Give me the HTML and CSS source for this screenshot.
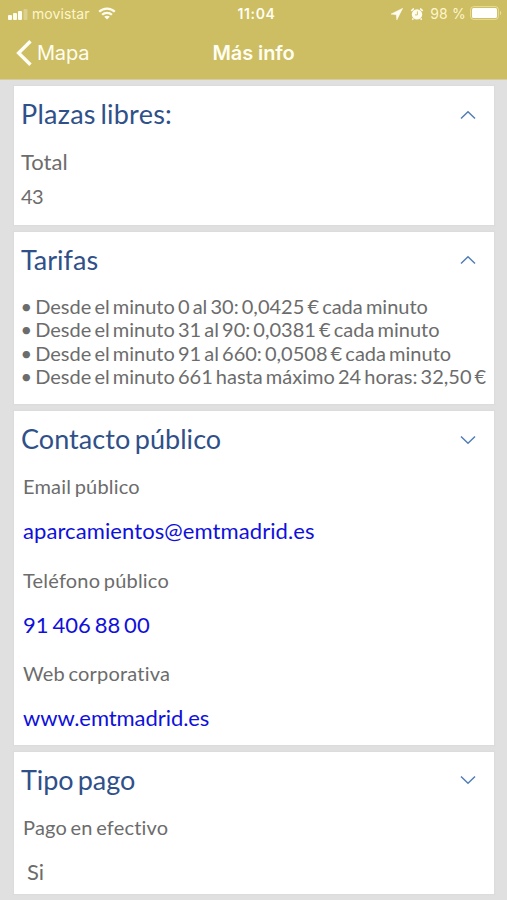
FILE: index.html
```html
<!DOCTYPE html>
<html lang="es">
<head>
<meta charset="utf-8">
<title>Más info</title>
<link rel="stylesheet" href="styles.css">
</head>
<body>
<header class="header">
  <div class="status">
    <div class="status-left">
      <svg class="signal" width="20" height="12" viewBox="0 0 20 12" fill="#fffdf0"><rect x="0" y="7" width="4" height="5" rx="1"/><rect x="5" y="5" width="4" height="7" rx="1"/><rect x="10" y="3" width="4" height="9" rx="1"/><rect x="15.5" y="1" width="4" height="11" rx="1" opacity=".3"/></svg>
      <span class="carrier">movistar</span>
      <svg width="18" height="13" viewBox="0 0 18 13" fill="none" stroke="#fffdf0" stroke-width="2.3"><path d="M1.2 4.8C5.5.5 12.5.5 16.8 4.8M4.1 7.8c2.7-2.7 7.1-2.7 9.8 0"/><path d="M9 12.6 6.2 9.8c1.6-1.5 4-1.5 5.6 0z" fill="#fffdf0" stroke="none"/></svg>
    </div>
    <span class="clock">11:04</span>
    <div class="status-right">
      <svg width="12" height="12" viewBox="0 0 12 12" fill="#fffdf0"><path d="M11.7.3 0 6.1l5.3.6.5 5.2z" stroke="#fffdf0" stroke-width=".5"/></svg>
      <svg class="alarm" width="14" height="14" viewBox="0 0 14 14" fill="none"><circle cx="7" cy="7.4" r="5.2" fill="#fffdf0"/><path d="M1.3 3.8 3.8 1.5M12.7 3.8l-2.5-2.3M3.4 11.5l-1.1 1.1M10.6 11.5l1.1 1.1" stroke="#fffdf0" stroke-width="1.6"/><path d="M7.4 4.4v3.5H5" stroke="#cdbd63" stroke-width=".9"/></svg>
      <span class="percent">98 %</span>
      <svg class="battery" width="32" height="15" viewBox="0 0 32 15"><rect x=".6" y=".6" width="27.8" height="12.8" rx="3" fill="none" stroke="#fff7bd" stroke-opacity=".55"/><rect x="2" y="2" width="25" height="10" rx="1.5" fill="#fffffc"/><path d="M30 4.8c1.7.7 1.7 3.7 0 4.4z" fill="#fff7bd" opacity=".6"/></svg>
    </div>
  </div>
  <nav class="nav">
    <a class="back"><svg width="16" height="26" viewBox="0 0 16 26" fill="none" stroke="#fffef4" stroke-width="3.4"><path d="M14.5 1.2 2.6 13l11.9 11.8"/></svg><span>Mapa</span></a>
    <h1 class="page-title">Más info</h1>
  </nav>
</header>
<main class="cards">
  <section class="card spaces">
    <div class="card-head"><h2 class="t-plazas">Plazas libres:</h2><svg class="chevron" viewBox="0 0 16 10"><path d="M1 8.5 8 1.7l7 6.8"/></svg></div>
    <p class="total">Total</p>
    <p class="count">43</p>
  </section>
  <section class="card rates">
    <div class="card-head"><h2 class="t-tarifas">Tarifas</h2><svg class="chevron" viewBox="0 0 16 10"><path d="M1 8.5 8 1.7l7 6.8"/></svg></div>
    <div class="rate-list">
      <p>• Desde el minuto 0 al 30: 0,0425 € cada minuto</p>
      <p>• Desde el minuto 31 al 90: 0,0381 € cada minuto</p>
      <p>• Desde el minuto 91 al 660: 0,0508 € cada minuto</p>
      <p>• Desde el minuto 661 hasta máximo 24 horas: 32,50 €</p>
    </div>
  </section>
  <section class="card contact">
    <div class="card-head"><h2 class="t-contacto">Contacto público</h2><svg class="chevron" viewBox="0 0 16 10"><path d="M1 1.5 8 8.3l7-6.8"/></svg></div>
    <dl class="fields">
      <dt>Email público</dt><dd><a class="link email">aparcamientos@emtmadrid.es</a></dd>
      <dt>Teléfono público</dt><dd><a class="link">91 406 88 00</a></dd>
      <dt>Web corporativa</dt><dd><a class="link web">www.emtmadrid.es</a></dd>
    </dl>
  </section>
  <section class="card payment">
    <div class="card-head"><h2 class="t-tipo">Tipo pago</h2><svg class="chevron" viewBox="0 0 16 10"><path d="M1 1.5 8 8.3l7-6.8"/></svg></div>
    <dl class="fields">
      <dt>Pago en efectivo</dt><dd class="plain">Si</dd>
    </dl>
  </section>
</main>
</body>
</html>
```
FILE: styles.css
```css
* { box-sizing: border-box; }
body { margin: 0; height: 900px; overflow: hidden; background: #e0e0e0; color: #6c6c6c; font-family: Lato, sans-serif; font-variant-ligatures: none; }
h1, h2, p, dl, dd { margin: 0; font-weight: 400; }
svg { display: block; flex: none; }
.header { height: 80px; background: #cdbd63; border-bottom: 1px solid #d5cda0; color: #fffef0; font-family: Inter, sans-serif; }
.status { display: grid; grid-template-columns: 1fr auto 1fr; align-items: center; height: 27px; padding: 0 5px 0 8px; }
.status-left, .status-right { display: flex; align-items: center; }
.status-right { justify-content: flex-end; }
.carrier { margin: 0 8px 0 4px; font-size: 14px; letter-spacing: .1px; color: #fdf6cb; }
.clock { margin-left: 3px; font-size: 14px; font-weight: 600; letter-spacing: .6px; }
.alarm { margin: 0 6px 0 7px; }
.percent { font-size: 14px; letter-spacing: .2px; color: #fdf6cb; }
.battery { margin-left: 4px; }
.nav { display: grid; grid-template-columns: 1fr auto 1fr; align-items: center; height: 51px; padding: 0 16px; }
.back { display: flex; align-items: center; gap: 5px; font-size: 20px; letter-spacing: -.2px; }
.page-title { font-size: 20px; font-weight: 600; letter-spacing: -.1px; }
.cards { display: flex; flex-direction: column; gap: 7.2px; padding: 6px 13px 0 14px; }
.card { background: #fff; padding: 8px 6.5px 0 7px; box-shadow: 0 0 1px 1px #dcdcdc; }
.spaces { height: 138.5px; }
.rates { height: 172.3px; }
.contact { height: 333.6px; }
.payment { height: 142px; }
.card-head { display: flex; justify-content: space-between; align-items: center; height: 40px; padding-right: 12px; }
.card-head h2 { font-size: 27px; line-height: 40px; color: #2f5089; white-space: nowrap; word-spacing: -2.5px; }
.card-head .t-plazas { letter-spacing: .25px; }
.card-head .t-contacto { letter-spacing: .05px; }
.card-head .t-tipo { letter-spacing: -.08px; }
.chevron { width: 16px; height: 10px; margin-top: 1px; fill: none; stroke: #517fb5; stroke-width: 1.5; }
.total { margin-top: 10px; font-size: 22px; line-height: 36px; }
.count { font-size: 20px; line-height: 33px; letter-spacing: -.6px; }
.rate-list { margin-top: 15px; margin-left: -.5px; font-size: 20px; line-height: 23.45px; white-space: nowrap; word-spacing: -2px; }
.fields { padding: 5px 2px 0; }
.fields dt { font-size: 20px; line-height: 45px; word-spacing: -1.8px; letter-spacing: .2px; }
.fields dd { margin-bottom: 5.4px; font-size: 22px; line-height: 43.2px; word-spacing: -1.7px; }
.link { color: #1010dc; }
.email { letter-spacing: .09px; }
.web { letter-spacing: -.06px; }
.fields .plain { padding-left: 4px; }
```
